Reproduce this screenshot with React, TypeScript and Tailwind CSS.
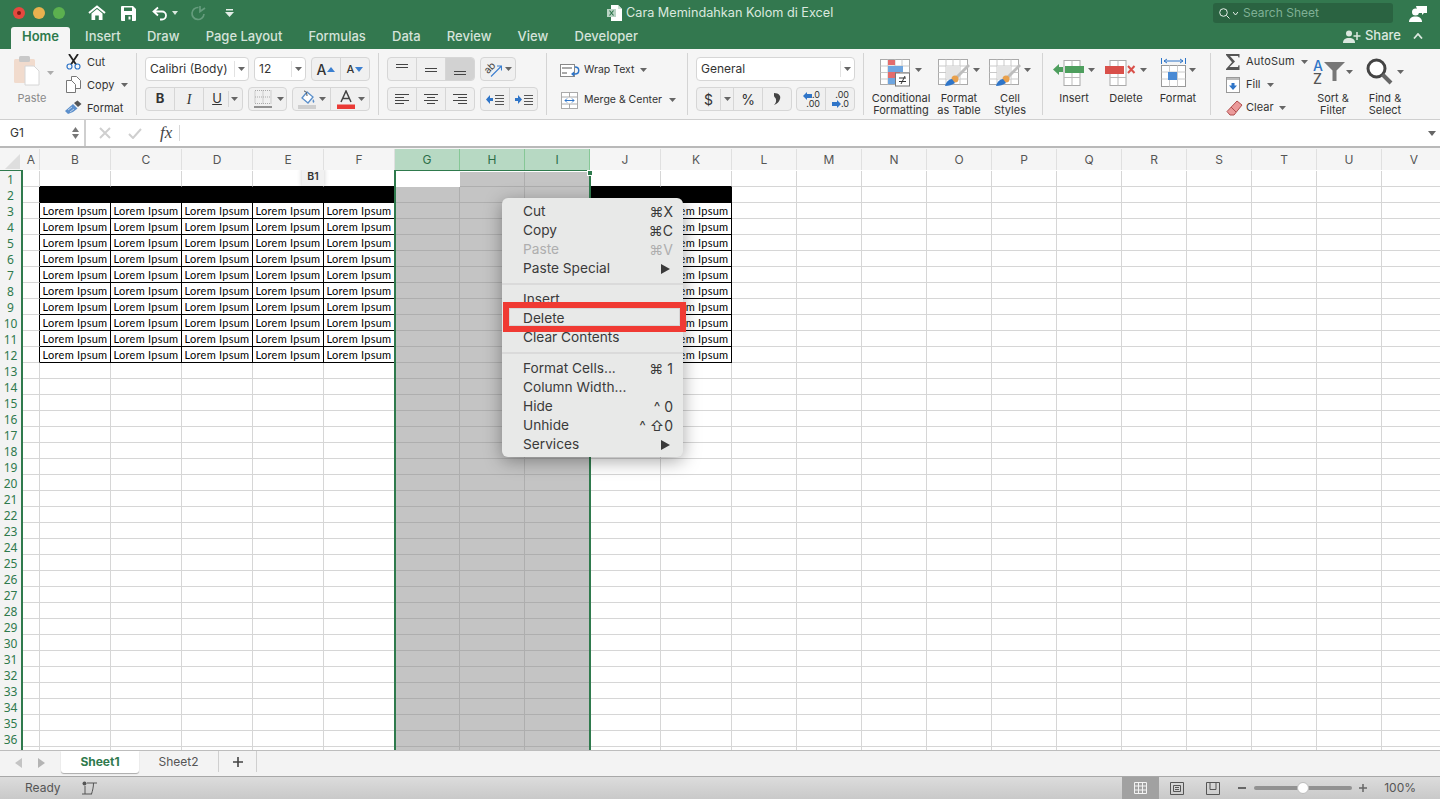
import React from "react";

const FONT = "font-['Inter','Noto_Sans',sans-serif]";

const TABS = ["Insert", "Draw", "Page Layout", "Formulas", "Data", "Review", "View", "Developer"];

const COLUMNS = [
  { label: "A", width: "w-[17px]" },
  { label: "B", width: "w-[71px]" },
  { label: "C", width: "w-[71px]" },
  { label: "D", width: "w-[71px]" },
  { label: "E", width: "w-[71px]" },
  { label: "F", width: "w-[71px]" },
  { label: "G", width: "w-[65px]" },
  { label: "H", width: "w-[65px]" },
  { label: "I", width: "w-[65px]" },
  { label: "J", width: "w-[71px]" },
  { label: "K", width: "w-[71px]" },
  { label: "L", width: "w-[65px]" },
  { label: "M", width: "w-[65px]" },
  { label: "N", width: "w-[65px]" },
  { label: "O", width: "w-[65px]" },
  { label: "P", width: "w-[65px]" },
  { label: "Q", width: "w-[65px]" },
  { label: "R", width: "w-[65px]" },
  { label: "S", width: "w-[65px]" },
  { label: "T", width: "w-[65px]" },
  { label: "U", width: "w-[65px]" },
  { label: "V", width: "w-[65px]" },
];

const ROWS = Array.from({ length: 37 }, (_, i) => i + 1);
const SELECTED = ["G", "H", "I"];
const TABLE = ["B", "C", "D", "E", "F", "J", "K"];

const MENU_TOP = [
  { label: "Cut", key: "⌘X" },
  { label: "Copy", key: "⌘C" },
  { label: "Paste", key: "⌘V", disabled: true },
  { label: "Paste Special", arrow: true },
];
const MENU_MID = [{ label: "Insert" }, { label: "Delete" }, { label: "Clear Contents" }];
const MENU_BOTTOM = [
  { label: "Format Cells...", key: "⌘ 1" },
  { label: "Column Width..." },
  { label: "Hide", key: "^ 0" },
  { label: "Unhide", key: "^ ⇧0" },
  { label: "Services", arrow: true },
];

// Small down-pointing caret used all over the ribbon
function Caret({ className = "" }: { className?: string }) {
  return (
    <svg width="7" height="4" viewBox="0 0 7 4" className={className}>
      <path d="M0 0h7L3.5 4z" fill="#666" />
    </svg>
  );
}

function Divider() {
  return <div className="h-[62px] w-px shrink-0 self-center bg-[#d4d4d4]" />;
}

// Horizontal text-lines icon for the alignment buttons
function Lines({ rows }: { rows: [number, number, number][] }) {
  return (
    <svg width="16" height="14" viewBox="0 0 16 14">
      {rows.map(([a, b, y], i) => (
        <line key={i} x1={a} x2={b} y1={y + 0.5} y2={y + 0.5} stroke="#444" strokeWidth="1" />
      ))}
    </svg>
  );
}

function HomeIcon() {
  return (
    <svg width="18" height="16" viewBox="0 0 18 16">
      <path d="M1 8 9 1.5 17 8" fill="none" stroke="#fff" strokeWidth="2" />
      <path d="M3.5 8.5 9 4l5.5 4.5V15h-3.7v-4.500H7.200V15H3.500z" fill="#fff" />
    </svg>
  );
}

function SaveIcon() {
  return (
    <svg width="15" height="15" viewBox="0 0 15 15">
      <path d="M1 0h11l3 3v11a1 1 0 0 1-1 1H1a1 1 0 0 1-1-1V1a1 1 0 0 1 1-1z" fill="#fff" />
      <rect x="3" y="1.500" width="8" height="3.500" fill="#33784f" />
      <rect x="4" y="9" width="7" height="6" fill="#33784f" />
      <rect x="7.500" y="10.500" width="2" height="3" fill="#fff" />
    </svg>
  );
}

function UndoIcon() {
  return (
    <svg width="16" height="15" viewBox="0 0 16 15">
      <path d="M6 1.500 1.500 5.500 6 9.500M2 5.500h8a4 4 0 0 1 4 4 4 4 0 0 1-4 4H8" fill="none" stroke="#fff" strokeWidth="1.800" />
    </svg>
  );
}

function RedoIcon() {
  return (
    <svg width="16" height="16" viewBox="0 0 16 16">
      <path d="M10 1v5.500L15 3M8.500 2.500A6 6 0 1 0 14 9" fill="none" stroke="#659c7d" strokeWidth="1.700" />
    </svg>
  );
}

function CustomizeIcon() {
  return (
    <svg width="9" height="8" viewBox="0 0 9 8">
      <rect x="1" y="0" width="7" height="1.500" fill="#e4eee8" />
      <path d="M0 3h9L4.500 8z" fill="#e4eee8" />
    </svg>
  );
}

function WorkbookIcon() {
  return (
    <svg width="15" height="16" viewBox="0 0 15 16">
      <path d="M4 0h7l4 4v12H4z" fill="#fff" />
      <path d="M11 0v4h4z" fill="#cfe0d6" />
      <rect x="0" y="4" width="9" height="8" fill="#b9d3c4" />
      <path d="M2.500 5.500 6.500 10.500M6.500 5.500 2.500 10.500" stroke="#33784f" strokeWidth="1.200" />
    </svg>
  );
}

function PasteIcon() {
  return (
    <svg width="26" height="31" viewBox="0 0 26 31">
      <rect x="0" y="4" width="21" height="24" rx="1.500" fill="#f1dbcd" />
      <rect x="5" y="1" width="11" height="6" rx="1.500" fill="#c9c9c9" />
      <path d="M11 11h9l5 5v14H11z" fill="#fff" stroke="#d6d6d6" />
    </svg>
  );
}

function ScissorsIcon() {
  return (
    <svg width="15" height="16" viewBox="0 0 15 16">
      <path d="M3 0 10 10.500M12 0 5 10.500" stroke="#222" strokeWidth="1.800" />
      <circle cx="3.500" cy="12.500" r="2.500" fill="none" stroke="#2f75c8" strokeWidth="1.200" />
      <circle cx="11.500" cy="12.500" r="2.500" fill="none" stroke="#2f75c8" strokeWidth="1.200" />
    </svg>
  );
}

function CopyIcon() {
  return (
    <svg width="15" height="17" viewBox="0 0 15 17">
      <path d="M5.500.500h5l4 4v8h-9z" fill="#fff" stroke="#777" />
      <path d="M.500 4.500h5l4 4v8h-9z" fill="#fff" stroke="#777" />
    </svg>
  );
}

function BrushIcon() {
  return (
    <svg width="17" height="15" viewBox="0 0 17 15">
      <path d="M9 3 12.500 0.500 16.500 4 13 7z" fill="#555" />
      <path d="M8 4 12.500 8.500 8 12 3 14 0 11z" fill="#5c8fcb" />
      <path d="M3 10 7 7M5 12 9 9" stroke="#d7e4f3" strokeWidth="0.800" />
    </svg>
  );
}

function GrowFontIcon({ up }: { up: boolean }) {
  return (
    <svg width="8" height="5" viewBox="0 0 8 5">
      <path d={up ? "M4 0 8 5H0z" : "M0 0h8L4 5z"} fill="#3b7fd0" />
    </svg>
  );
}

function BordersIcon() {
  return (
    <svg width="18" height="18" viewBox="0 0 18 18">
      <path d="M1 .500h16v13H1zM1 7h16M9 .500v13" fill="none" stroke="#aaa" strokeDasharray="1 1" />
      <line x1="0" x2="18" y1="17" y2="17" stroke="#333" />
    </svg>
  );
}

function FillIcon() {
  return (
    <svg width="18" height="19" viewBox="0 0 18 19">
      <path d="M4 8 9 2l6 5-5 6z" fill="#fff" stroke="#5b8fca" strokeWidth="1.300" />
      <path d="M6 1c2 0 3 2 3 5" fill="none" stroke="#555" />
      <path d="M15 9c1 1.500 2 2.500 1 3.500s-2-1-1-3.500z" fill="#5b8fca" />
      <rect x="0" y="15" width="18" height="4" fill="#cfcfcf" />
    </svg>
  );
}

function FontColorIcon() {
  return (
    <svg width="18" height="19" viewBox="0 0 18 19">
      <path d="M4 12 9 1l5 11M6 8.500h6" fill="none" stroke="#444" strokeWidth="1.500" />
      <rect x="0" y="14.500" width="18" height="4.500" fill="#ea3a35" />
    </svg>
  );
}

function OrientationIcon() {
  return (
    <svg width="18" height="16" viewBox="0 0 18 16">
      <text x="0" y="10" fontSize="10" fill="#444" transform="rotate(-45 6 7)" fontFamily="Inter">ab</text>
      <path d="M7 15.500 17 5.500M13 5h4.500v4.500" fill="none" stroke="#3b7fd0" strokeWidth="1.100" />
    </svg>
  );
}

function IndentIcon({ flip }: { flip?: boolean }) {
  return (
    <svg width="18" height="11" viewBox="0 0 18 11">
      <path d={flip ? "M7 5.500 3 1v3H0v3h3v3z" : "M0 5.500 4 1v3h3v3H4v3z"} fill="#2f75c8" />
      <path d="M9 1.500h9M9 4.500h9M9 7.500h9M9 10.500h9" stroke="#555" />
    </svg>
  );
}

function WrapIcon() {
  return (
    <svg width="20" height="13" viewBox="0 0 20 13">
      <rect x=".5" y=".5" width="14" height="12" fill="#fff" stroke="#888" />
      <path d="M2 4h10M2 9h5" stroke="#555" />
      <path d="M15 3c5 0 5 7 0 7h-2" fill="none" stroke="#2f75c8" strokeWidth="1.500" />
      <path d="M11 10l3-2.500v5z" fill="#2f75c8" />
    </svg>
  );
}

function MergeIcon() {
  return (
    <svg width="17" height="17" viewBox="0 0 17 17">
      <rect x=".5" y=".5" width="16" height="16" fill="#fff" stroke="#aaa" />
      <path d="M.5 5h16M.5 12h16M8.500 .5V5M8.500 12v4.500" stroke="#aaa" />
      <path d="M4 8.500h9M6 6.500l-2 2 2 2M11 6.500l2 2-2 2" fill="none" stroke="#2f75c8" />
    </svg>
  );
}

function CommaIcon() {
  return (
    <svg width="8" height="12" viewBox="0 0 8 12">
      <path d="M1 0c5 0 7 3 6 6-.8 3-3 5-6 6 1.500-1.500 2.500-3.500 2-5.500C2.800 4.500 1 4.500 1 2.500z" fill="#444" />
    </svg>
  );
}

function DecimalIcon({ increase }: { increase: boolean }) {
  return (
    <div className="relative flex h-full w-full flex-col items-end justify-center pr-[5px] text-[9px] leading-[9px] text-[#333]">
      {increase ? (
        <>
          <span>.0</span>
          <span>.00</span>
        </>
      ) : (
        <>
          <span>.00</span>
          <span>.0</span>
        </>
      )}
      <svg
        width="9"
        height="8"
        viewBox="0 0 9 8"
        className={increase ? "absolute left-[6px] top-[4px]" : "absolute left-[6px] top-[12px]"}
      >
        <path d={increase ? "M0 4 4 0v2h5v4H4v2z" : "M9 4 5 0v2H0v4h5v2z"} fill="#2f75c8" />
      </svg>
    </div>
  );
}

function SheetGrid({ children }: { children?: React.ReactNode }) {
  return (
    <svg width="32" height="28" viewBox="0 0 32 28">
      <rect x=".5" y=".5" width="29" height="25" fill="#fff" stroke="#aaa" />
      <path d="M.5 7h29M.5 13.500h29M.5 20h29M8 .5v25M15 .5v25M22 .5v25" stroke="#c9c9c9" />
      {children}
    </svg>
  );
}

function ConditionalIcon() {
  return (
    <SheetGrid>
      <rect x="8" y="1" width="7" height="5" fill="#e46c6c" />
      <rect x="8" y="7" width="15" height="6" fill="#6fa6e0" />
      <rect x="8" y="13" width="12" height="6" fill="#e46c6c" />
      <rect x="8" y="19" width="7" height="6" fill="#6fa6e0" />
      <rect x="15.500" y="14" width="14" height="13" fill="#fff" stroke="#777" />
      <path d="M19 19h7M19 22.500h7M25 17l-4 8" stroke="#333" />
    </SheetGrid>
  );
}

function TableBrushIcon() {
  return (
    <SheetGrid>
      <rect x="8" y="7" width="14" height="13" fill="#e4e4e4" />
      <path d="M31 6 19 18" stroke="#bdbdbd" strokeWidth="3" />
      <circle cx="17" cy="20" r="3.500" fill="#e8a04c" />
      <path d="M7 27c1-4 4-7 7-7l3 4c-3 2-6 3-10 3z" fill="#2f75c8" />
    </SheetGrid>
  );
}

function InsertIcon() {
  return (
    <svg width="32" height="26" viewBox="0 0 32 26">
      <rect x="11" y=".5" width="16" height="25" fill="#fff" stroke="#aaa" />
      <path d="M11 17.500h16M19 .5v25" stroke="#bbb" />
      <rect x="12" y="6" width="19" height="7" fill="#4e9f5e" />
      <path d="M0 9.500 6 4v3h4v5H6v3z" fill="#4e9f5e" />
    </svg>
  );
}

function DeleteIcon() {
  return (
    <svg width="32" height="26" viewBox="0 0 32 26">
      <rect x="5" y=".5" width="16" height="25" fill="#fff" stroke="#aaa" />
      <path d="M5 17.500h16M13 .5v25" stroke="#bbb" />
      <rect x="0" y="6" width="19" height="8" fill="#d9504a" />
      <path d="M23 6l6.500 7M29.500 6 23 13" stroke="#d9504a" strokeWidth="2" />
    </svg>
  );
}

function FormatIcon() {
  return (
    <svg width="25" height="29" viewBox="0 0 25 29">
      <path d="M.5 0v6M24.500 0v6M3 3h19M6 1 3 3l3 2M19 1l3 2-3 2" fill="none" stroke="#2f75c8" />
      <rect x=".5" y="7.500" width="24" height="21" fill="#fff" stroke="#999" />
      <path d="M.5 14h24M.5 21h24M8.500 7.500v21M16.500 7.500v21" stroke="#ccc" />
      <rect x="7" y="14" width="9" height="8" fill="#4a8ad4" />
    </svg>
  );
}

function SumIcon() {
  return (
    <svg width="14" height="16" viewBox="0 0 14 16">
      <path d="M0 0h13.500v3.500H12.500L12 2H4l5 5.500L3.500 13H12l.5-1.800h1V16H0v-1l6-6.800L0 1z" fill="#555" />
    </svg>
  );
}

function FillDownIcon() {
  return (
    <svg width="14" height="16" viewBox="0 0 14 16">
      <rect x=".5" y=".5" width="13" height="15" fill="#fff" stroke="#999" />
      <rect x="1" y="1" width="12" height="2" fill="#bbb" />
      <path d="M7 13 3 8.500h2.500V6h3v2.500H11z" fill="#2f75c8" />
    </svg>
  );
}

function EraserIcon() {
  return (
    <svg width="17" height="16" viewBox="0 0 17 16">
      <path d="M11 1 16 5 8 15H4L1 11.500z" fill="#eb9a9a" stroke="#b04f4f" />
      <path d="M5 7l5 5" stroke="#b04f4f" />
    </svg>
  );
}

function FunnelIcon() {
  return (
    <svg width="21" height="19" viewBox="0 0 21 19">
      <path d="M0 0h21L12.500 8.500V19h-4V8.500z" fill="#777" />
    </svg>
  );
}

function MagnifierIcon() {
  return (
    <svg width="27" height="27" viewBox="0 0 27 27">
      <circle cx="10.500" cy="10.500" r="8.500" fill="#fff" stroke="#444" strokeWidth="3" />
      <path d="M16.500 16.500 25 25" stroke="#666" strokeWidth="4" />
    </svg>
  );
}

function SearchIcon() {
  return (
    <svg width="11" height="11" viewBox="0 0 11 11">
      <circle cx="4.500" cy="4.500" r="3.800" fill="none" stroke="#e6efe9" />
      <path d="M7.500 7.500 10.500 10.500" stroke="#e6efe9" />
    </svg>
  );
}

function PersonBubbleIcon() {
  return (
    <svg width="18" height="18" viewBox="0 0 18 18">
      <path d="M7 2h11v7h-3l-2 2V9H9z" fill="#fff" />
      <circle cx="6.500" cy="8" r="3.500" fill="#fff" />
      <path d="M0 18c0-3.500 2.500-5.500 6.500-5.500S13 14.500 13 18z" fill="#fff" />
    </svg>
  );
}

function ShareIcon() {
  return (
    <svg width="18" height="13" viewBox="0 0 18 13">
      <circle cx="6" cy="3.500" r="3" fill="#dbe8df" />
      <path d="M0 13c0-3.500 2-5 6-5s6 1.500 6 5z" fill="#dbe8df" />
      <path d="M14 2v8M10.500 6h7" stroke="#dbe8df" strokeWidth="1.500" />
    </svg>
  );
}

function RibbonButton({ children, className = "" }: { children: React.ReactNode; className?: string }) {
  return <div className={`flex h-full items-center justify-center border-r border-[#d6d6d6] last:border-r-0 ${className}`}>{children}</div>;
}

function ButtonGroup({ children, className = "" }: { children: React.ReactNode; className?: string }) {
  return <div className={`flex h-[24px] overflow-hidden rounded-[4px] border border-[#d6d6d6] bg-[#f0f0f0] ${className}`}>{children}</div>;
}

function BigButton({
  icon,
  label,
  width,
  caret = true,
}: {
  icon: React.ReactNode;
  label: React.ReactNode;
  width: string;
  caret?: boolean;
}) {
  return (
    <div className={`flex shrink-0 flex-col items-center ${width}`}>
      <div className="flex h-[34px] shrink-0 items-center gap-[3px] pt-px">
        {icon}
        {caret && <Caret className="mb-[6px]" />}
      </div>
      <div className="whitespace-nowrap pt-[3px] text-center text-[11px] leading-[12px] text-[#333]">{label}</div>
    </div>
  );
}

function TitleBar() {
  return (
    <div className="h-[49px] shrink-0 bg-[#33784f] text-white">
      <div className="flex h-[26px] items-center">
        <div className="ml-[13px] flex items-center gap-[8px]">
          <div className="flex h-[12px] w-[12px] items-center justify-center rounded-full bg-[#e5483f]">
            <div className="h-[4px] w-[4px] rounded-full bg-[#7d1a14]" />
          </div>
          <div className="h-[12px] w-[12px] rounded-full bg-[#e9b14f]" />
          <div className="h-[12px] w-[12px] rounded-full bg-[#5cb04f]" />
        </div>
        <div className="ml-[23px] flex items-center">
          <HomeIcon />
          <div className="ml-[15px]">
            <SaveIcon />
          </div>
          <div className="ml-[16px]">
            <UndoIcon />
          </div>
          <svg width="6" height="4" viewBox="0 0 6 4" className="ml-[4px]">
            <path d="M0 0h6L3 4z" fill="#dbe8df" />
          </svg>
          <div className="ml-[12px]">
            <RedoIcon />
          </div>
          <div className="ml-[19px]">
            <CustomizeIcon />
          </div>
        </div>
        <div className="ml-[373px] flex items-center gap-[4px] text-[12.7px] text-[#dbe8df]">
          <WorkbookIcon />
          <span>Cara Memindahkan Kolom di Excel</span>
        </div>
        <div className="ml-auto flex items-center">
          <div className="flex h-[20px] w-[180px] items-center gap-[3px] rounded-[3px] bg-[#2a6341] pl-[6px] text-[12px] text-[#7fb095]">
            <SearchIcon />
            <svg width="5" height="3" viewBox="0 0 5 3" className="mr-[2px]">
              <path d="M0 0l2.500 3L5 0" fill="none" stroke="#e6efe9" />
            </svg>
            <span>Search Sheet</span>
          </div>
          <div className="ml-[16px] mr-[13px]">
            <PersonBubbleIcon />
          </div>
        </div>
      </div>
      <div className="flex h-[23px] items-end">
        <div className="ml-[11px] flex h-[22px] w-[59px] items-center justify-center rounded-t-[3px] bg-[#f5f5f5] pb-[2px] text-[13px] font-semibold text-[#2d7a4c]">
          Home
        </div>
        <div className="ml-[2px] flex h-[22px] items-center pb-[2px]">
          {TABS.map((t) => (
            <span key={t} className="px-[13.1px] text-[13px] font-medium text-[#d5e3da]">
              {t}
            </span>
          ))}
        </div>
        <div className="ml-auto mr-[17px] flex h-[22px] items-center pb-[4px]">
          <ShareIcon />
          <span className="ml-[4px] text-[13px] font-medium text-[#dbe8df]">Share</span>
          <svg width="10" height="6" viewBox="0 0 10 6" className="ml-[12px]">
            <path d="M1 5.500 5 1l4 4.500" fill="none" stroke="#dbe8df" strokeWidth="1.800" />
          </svg>
        </div>
      </div>
    </div>
  );
}

function Ribbon() {
  return (
    <div className="flex h-[71px] shrink-0 border-b border-[#cfcfcf] bg-[#f5f5f5] text-[#333]">
      {/* Clipboard */}
      <div className="flex w-[136px] shrink-0">
        <div className="ml-[14px] flex w-[40px] flex-col">
          <div className="flex items-center pt-[6px]">
            <PasteIcon />
            <Caret className="ml-[7px] mt-[4px] opacity-50" />
          </div>
          <span className="-ml-[4px] pt-[4px] text-center text-[11px] text-[#8a8a8a]">Paste</span>
        </div>
        <div className="ml-[12px] flex flex-col pt-[1px] text-[11px] leading-[16px]">
          <div className="flex h-[23px] items-center gap-[6px]">
            <ScissorsIcon />
            <span>Cut</span>
          </div>
          <div className="flex h-[23px] items-center gap-[6px]">
            <CopyIcon />
            <span>Copy</span>
            <Caret className="ml-[1px]" />
          </div>
          <div className="-ml-[1px] flex h-[23px] items-center gap-[5px]">
            <BrushIcon />
            <span>Format</span>
          </div>
        </div>
      </div>
      <Divider />

      {/* Font */}
      <div className="flex w-[241px] shrink-0 flex-col gap-[6px] pl-[8px] pt-[8px]">
        <div className="flex gap-[5px]">
          <div className="flex h-[24px] w-[104px] items-center rounded-[4px] border border-[#d6d6d6] bg-white pb-px pl-[4px] text-[12px]">
            <span className="flex-1">Calibri (Body)</span>
            <span className="flex h-[16px] w-[14px] items-center justify-center border-l border-[#e2e2e2]">
              <Caret />
            </span>
          </div>
          <div className="flex h-[24px] w-[52px] items-center rounded-[4px] border border-[#d6d6d6] bg-white pb-px pl-[4px] text-[12px]">
            <span className="flex-1">12</span>
            <span className="flex h-[16px] w-[14px] items-center justify-center border-l border-[#e2e2e2]">
              <Caret />
            </span>
          </div>
          <ButtonGroup className="w-[59px]">
            <RibbonButton className="w-[29px] gap-[1px] text-[14px] font-medium">
              A<GrowFontIcon up />
            </RibbonButton>
            <RibbonButton className="flex-1 gap-[1px] text-[11px] font-medium">
              A<GrowFontIcon up={false} />
            </RibbonButton>
          </ButtonGroup>
        </div>
        <div className="flex gap-[5px]">
          <ButtonGroup className="w-[98px]">
            <RibbonButton className="w-[29px] text-[13px] font-bold">B</RibbonButton>
            <RibbonButton className="w-[29px] font-['Liberation_Serif',serif] text-[14px] italic">I</RibbonButton>
            <div className="flex flex-1 items-center justify-center gap-[6px] pl-[6px]">
              <span className="text-[13px] underline">U</span>
              <span className="flex h-[16px] w-[12px] items-center justify-center border-l border-[#d6d6d6]">
                <Caret />
              </span>
            </div>
          </ButtonGroup>
          <ButtonGroup className="w-[39px]">
            <div className="flex flex-1 items-center justify-center gap-[2px] pl-[2px]">
              <BordersIcon />
              <Caret className="ml-[3px]" />
            </div>
          </ButtonGroup>
          <ButtonGroup className="w-[78px]">
            <RibbonButton className="w-[38px] gap-[3px] pl-[1px]">
              <FillIcon />
              <Caret />
            </RibbonButton>
            <RibbonButton className="flex-1 gap-[3px] pl-[2px]">
              <FontColorIcon />
              <Caret />
            </RibbonButton>
          </ButtonGroup>
        </div>
      </div>
      <Divider />

      {/* Alignment */}
      <div className="flex w-[167px] shrink-0 flex-col gap-[6px] pl-[8px] pt-[8px]">
        <div className="flex gap-[5px]">
          <ButtonGroup className="w-[88px]">
            <RibbonButton className="w-[29px]">
              <Lines rows={[[2, 14, 2], [2, 14, 5]]} />
            </RibbonButton>
            <RibbonButton className="w-[29px]">
              <Lines rows={[[2, 14, 6], [2, 14, 9]]} />
            </RibbonButton>
            <RibbonButton className="flex-1 bg-[#d2d2d2]">
              <Lines rows={[[2, 14, 9], [2, 14, 12]]} />
            </RibbonButton>
          </ButtonGroup>
          <ButtonGroup className="w-[36px]">
            <div className="flex flex-1 items-center justify-center gap-[3px]">
              <OrientationIcon />
              <Caret />
            </div>
          </ButtonGroup>
        </div>
        <div className="flex gap-[5px]">
          <ButtonGroup className="w-[88px]">
            <RibbonButton className="w-[29px]">
              <Lines rows={[[1, 15, 2], [1, 10, 5], [1, 15, 8], [1, 10, 11]]} />
            </RibbonButton>
            <RibbonButton className="w-[29px]">
              <Lines rows={[[1, 15, 2], [4, 12, 5], [1, 15, 8], [4, 12, 11]]} />
            </RibbonButton>
            <RibbonButton className="flex-1">
              <Lines rows={[[1, 15, 2], [6, 15, 5], [1, 15, 8], [6, 15, 11]]} />
            </RibbonButton>
          </ButtonGroup>
          <ButtonGroup className="w-[58px]">
            <RibbonButton className="w-[29px]">
              <IndentIcon />
            </RibbonButton>
            <RibbonButton className="flex-1">
              <IndentIcon flip />
            </RibbonButton>
          </ButtonGroup>
        </div>
      </div>
      <Divider />

      {/* Wrap and merge */}
      <div className="flex w-[140px] shrink-0 flex-col pl-[13px] pt-[12px] text-[10.5px]">
        <div className="flex h-[18px] items-center">
          <WrapIcon />
          <span className="ml-[4px]">Wrap Text</span>
          <Caret className="ml-[6px]" />
        </div>
        <div className="mt-[12px] flex h-[18px] items-center">
          <div className="ml-[1px]">
            <MergeIcon />
          </div>
          <span className="ml-[6px]">Merge &amp; Center</span>
          <Caret className="ml-[7px]" />
        </div>
      </div>
      <Divider />

      {/* Number */}
      <div className="flex w-[175px] shrink-0 flex-col gap-[6px] pl-[8px] pt-[8px]">
        <div className="flex h-[24px] w-[159px] items-center rounded-[4px] border border-[#d6d6d6] bg-white pb-px pl-[4px] text-[12px]">
          <span className="flex-1">General</span>
          <span className="flex h-[16px] w-[14px] items-center justify-center border-l border-[#e2e2e2]">
            <Caret />
          </span>
        </div>
        <div className="flex gap-[4px]">
          <ButtonGroup className="w-[96px]">
            <RibbonButton className="w-[37px] text-[14px]">
              <span className="flex-1 border-r border-[#d6d6d6] text-center">$</span>
              <span className="flex w-[12px] justify-center">
                <Caret />
              </span>
            </RibbonButton>
            <RibbonButton className="w-[29px] text-[14px]">%</RibbonButton>
            <RibbonButton className="flex-1">
              <CommaIcon />
            </RibbonButton>
          </ButtonGroup>
          <ButtonGroup className="w-[59px]">
            <RibbonButton className="w-[29px]">
              <DecimalIcon increase />
            </RibbonButton>
            <RibbonButton className="flex-1">
              <DecimalIcon increase={false} />
            </RibbonButton>
          </ButtonGroup>
        </div>
      </div>
      <Divider />

      {/* Styles */}
      <div className="flex w-[178px] shrink-0 pt-[6px]">
        <BigButton icon={<ConditionalIcon />} label={<>Conditional<br />Formatting</>} width="w-[74px]" />
        <BigButton icon={<TableBrushIcon />} label={<>Format<br />as Table</>} width="w-[42px]" />
        <BigButton icon={<TableBrushIcon />} label={<>Cell<br />Styles</>} width="w-[60px]" />
      </div>
      <Divider />

      {/* Cells */}
      <div className="flex w-[167px] shrink-0 pl-[5px] pt-[6px]">
        <BigButton icon={<InsertIcon />} label="Insert" width="w-[52px]" />
        <BigButton icon={<DeleteIcon />} label="Delete" width="w-[52px]" />
        <BigButton icon={<FormatIcon />} label="Format" width="w-[52px]" />
      </div>
      <Divider />

      {/* Editing */}
      <div className="flex flex-1 pt-[1px]">
        <div className="ml-[15px] flex w-[96px] shrink-0 flex-col text-[11px]">
          <div className="flex h-[23px] items-center">
            <span className="flex w-[20px]">
              <SumIcon />
            </span>
            <span className="tracking-[0.2px]">AutoSum</span>
            <Caret className="ml-[6px]" />
          </div>
          <div className="flex h-[23px] items-center">
            <span className="flex w-[20px]">
              <FillDownIcon />
            </span>
            <span>Fill</span>
            <Caret className="ml-[6px]" />
          </div>
          <div className="flex h-[23px] items-center">
            <span className="flex w-[20px]">
              <EraserIcon />
            </span>
            <span>Clear</span>
            <Caret className="ml-[5px]" />
          </div>
        </div>
        <div className="-ml-[15px] flex w-[52px] shrink-0 flex-col items-center pt-[4px]">
          <div className="flex h-[35px] items-center gap-[1px]">
            <div className="flex flex-col text-[14px] font-medium leading-[13px]">
              <span className="text-[#2f75c8]">A</span>
              <span className="text-[#555]">Z</span>
            </div>
            <FunnelIcon />
            <Caret />
          </div>
          <div className="pt-[3px] text-center text-[11px] leading-[12px]">
            Sort &amp;
            <br />
            Filter
          </div>
        </div>
        <div className="flex w-[52px] shrink-0 flex-col items-center pt-[4px]">
          <div className="flex h-[35px] items-center gap-[4px]">
            <MagnifierIcon />
            <Caret />
          </div>
          <div className="pt-[3px] text-center text-[11px] leading-[12px]">
            Find &amp;
            <br />
            Select
          </div>
        </div>
      </div>
    </div>
  );
}

function FormulaBar() {
  return (
    <div className="flex h-[26px] shrink-0 items-center bg-white">
      <div className="flex h-full w-[86px] items-center border-r-2 border-[#cfcfcf] pl-[10px] text-[12px] text-[#333]">
        <span className="flex-1">G1</span>
        <div className="mr-[5px] flex flex-col gap-[2px]">
          <svg width="7" height="5" viewBox="0 0 7 5">
            <path d="M3.500 0 7 5H0z" fill="#777" />
          </svg>
          <svg width="7" height="5" viewBox="0 0 7 5">
            <path d="M0 0h7L3.500 5z" fill="#777" />
          </svg>
        </div>
      </div>
      <svg width="12" height="12" viewBox="0 0 12 12" className="ml-[13px]">
        <path d="M1 1l10 10M11 1 1 11" stroke="#cfcfcf" strokeWidth="2" />
      </svg>
      <svg width="14" height="11" viewBox="0 0 14 11" className="ml-[17px]">
        <path d="M1 6l4 4 8-9" fill="none" stroke="#cfcfcf" strokeWidth="2" />
      </svg>
      <span className="ml-[18px] font-['Liberation_Serif',serif] text-[17px] italic text-[#444]">fx</span>
      <div className="ml-[7px] h-[16px] w-px bg-[#d8d8d8]" />
      <svg width="8" height="5" viewBox="0 0 8 5" className="ml-auto mr-[4px]">
        <path d="M0 0h8L4 5z" fill="#666" />
      </svg>
    </div>
  );
}

function ColumnHeaders() {
  return (
    <div className="flex h-[24px] shrink-0 border-t-2 border-[#b9b9b9] bg-[#f5f5f5] pt-px">
      <div className="relative w-[23px] shrink-0">
        <svg width="22" height="21" viewBox="0 0 22 21" className="absolute bottom-0 left-0">
          <path d="M5 20 20 5v15z" fill="#dedede" />
        </svg>
      </div>
      {COLUMNS.map((c) => {
        const selected = SELECTED.includes(c.label);
        return (
          <div
            key={c.label}
            className={
              selected
                ? `flex shrink-0 items-center justify-center border-r border-[#86c796] bg-[#b7d9c3] text-[12px] text-[#2c6e47] ${c.width}`
                : `flex shrink-0 items-center justify-center border-r border-[#e0e0e0] text-[12px] text-[#555] ${c.width}`
            }
          >
            {c.label}
          </div>
        );
      })}
    </div>
  );
}

function Cell({ col, row, width }: { col: string; row: number; width: string }) {
  const inTable = row >= 3 && row <= 12 && TABLE.includes(col);
  if (SELECTED.includes(col)) {
    if (col === "G" && row === 1) return <div className={`shrink-0 bg-white ${width}`} />;
    return <div className={`shrink-0 border-b border-r border-[#aeaeae] bg-[#c4c4c4] ${width}`} />;
  }
  if (row === 2 && TABLE.includes(col)) return <div className={`shrink-0 bg-black ${width}`} />;
  if (inTable) {
    return (
      <div className={`flex shrink-0 items-center justify-center border-b border-r border-black font-['Lato',sans-serif] text-[11px] leading-none tracking-[0.25px] text-black ${width}`}>
        Lorem Ipsum
      </div>
    );
  }
  // column A and the row-1 cells touching the table take its black edge
  const blackRight = col === "A" && row >= 2 && row <= 12;
  const blackBottom = row === 1 && TABLE.includes(col);
  return (
    <div
      className={`shrink-0 border-b border-r ${blackRight ? "border-r-black" : "border-r-[#d6d6d6]"} ${
        blackBottom ? "border-b-black" : "border-b-[#d6d6d6]"
      } ${width}`}
    />
  );
}

function MenuItem({ label, shortcut, disabled, arrow }: { label: string; shortcut?: string; disabled?: boolean; arrow?: boolean }) {
  return (
    <div className={`flex h-[19px] items-center pl-[21px] pr-[10px] text-[13.7px] ${disabled ? "text-[#aeaeae]" : "text-[#3a3a3a]"}`}>
      <span className="flex-1">{label}</span>
      {shortcut && <span className="text-[14px]">{shortcut}</span>}
      {arrow && (
        <svg width="9" height="10" viewBox="0 0 9 10" className="mr-[3px]">
          <path d="M0 0l9 5-9 5z" fill="#3a3a3a" />
        </svg>
      )}
    </div>
  );
}

function ContextMenu() {
  return (
    <div className="absolute left-[502px] top-[28px] w-[181px] rounded-[6px] bg-[#e8e9e8] pb-[3px] pt-[4px] shadow-[0_4px_18px_rgba(0,0,0,0.35)]">
      {MENU_TOP.map((m) => (
        <MenuItem key={m.label} label={m.label} shortcut={m.key} disabled={m.disabled} arrow={m.arrow} />
      ))}
      <div className="my-[5px] h-[2px] bg-[#dadada]" />
      {MENU_MID.map((m) => (
        <MenuItem key={m.label} label={m.label} />
      ))}
      <div className="my-[5px] h-[2px] bg-[#dadada]" />
      {MENU_BOTTOM.map((m) => (
        <MenuItem key={m.label} label={m.label} shortcut={m.key} arrow={m.arrow} />
      ))}
      <div className="absolute left-px top-[104px] h-[30px] w-[183px] border-[6px] border-[#f03a33]">
        <div className="h-full w-full border border-[#d6d6d6]" />
      </div>
    </div>
  );
}

function Grid() {
  return (
    <div className="relative flex-1 overflow-hidden bg-white pt-px">
      {ROWS.map((row) => (
        <div key={row} className="flex h-[16px]">
          <div className="flex w-[23px] shrink-0 items-center justify-center border-r-2 border-[#2f7a4d] bg-[#f3f3f3] pt-[1px] font-['Noto_Sans',sans-serif] text-[12px] text-[#2f7a4d]">
            {row}
          </div>
          {COLUMNS.map((c) => (
            <Cell key={c.label} col={c.label} row={row} width={c.width} />
          ))}
        </div>
      ))}
      {/* row-1 edge of the row header */}
      <div className="absolute left-0 top-0 h-px w-[23px] bg-[#2f7a4d]" />
      {/* column selection outline */}
      <div className="absolute bottom-0 left-[394px] top-0 w-[197px] border-x-2 border-t border-[#2f7a4d]">
        <div className="ml-[63px] h-px bg-white" />
      </div>
      <div className="absolute left-[587px] top-0 h-[6px] w-[6px] border border-white bg-[#2f7a4d]" />
      {/* hover tooltip from the column drag */}
      <div className="absolute left-[302px] top-[-3px] flex h-[19px] w-[22px] items-center justify-center bg-[#f1f1f1] text-[10.5px] font-semibold text-[#333] shadow-[0_1px_5px_rgba(0,0,0,0.2)]">
        B1
      </div>
      <ContextMenu />
    </div>
  );
}

function SheetTabs() {
  return (
    <div className="flex h-[26px] shrink-0 border-t border-[#bdbdbd] bg-[#f3f3f3]">
      <div className="flex w-[61px] items-center gap-[16px] pb-[2px] pl-[15px]">
        <svg width="7" height="10" viewBox="0 0 7 10">
          <path d="M7 0v10L0 5z" fill="#c4c4c4" />
        </svg>
        <svg width="7" height="10" viewBox="0 0 7 10">
          <path d="M0 0v10l7-5z" fill="#b4b4b4" />
        </svg>
      </div>
      <div className="flex h-[22px] w-[78px] items-center justify-center rounded-b-[3px] bg-white text-[12px] font-bold text-[#2f7a4d] shadow-[0_1px_1px_rgba(0,0,0,0.3)]">
        Sheet1
      </div>
      <div className="flex h-[21px] w-[80px] items-center justify-center border-r border-[#cfcfcf] text-[12px] text-[#555]">Sheet2</div>
      <div className="flex h-[21px] w-[38px] items-center justify-center border-r border-[#cfcfcf]">
        <svg width="10" height="10" viewBox="0 0 10 10">
          <path d="M5 0v10M0 5h10" stroke="#444" strokeWidth="1.600" />
        </svg>
      </div>
    </div>
  );
}

function StatusBar() {
  return (
    <div className="flex h-[23px] shrink-0 items-center border-t border-[#a8a8a8] bg-gradient-to-b from-[#dcdcdc] to-[#c9c9c9] text-[#555]">
      <span className="ml-[25px] text-[12px]">Ready</span>
      <svg width="16" height="14" viewBox="0 0 16 14" className="ml-[21px]">
        <circle cx="2.500" cy="2.500" r="2" fill="#555" />
        <path d="M5 2h10M11.500 2c0 4-1 8-2 11M0 13h10M3 5v8" fill="none" stroke="#555" />
      </svg>
      <div className="ml-auto flex h-full items-center">
        <div className="flex h-full w-[37px] items-center justify-center bg-[#a1a1a1]">
          <svg width="13" height="12" viewBox="0 0 13 12">
            <path d="M.5.500h12v11H.5zM.5 4h12M.5 8h12M4.500.500v11M8.500.500v11" fill="none" stroke="#f3f3f3" />
          </svg>
        </div>
        <div className="flex w-[36px] justify-center">
          <svg width="14" height="13" viewBox="0 0 14 13">
            <path d="M.5.500h13v12H.5zM3.500 3.500h7v6h-7zM5 5.500h4M5 7.500h4" fill="none" stroke="#555" />
          </svg>
        </div>
        <div className="flex w-[36px] justify-center">
          <svg width="14" height="13" viewBox="0 0 14 13">
            <path d="M.5.500h13v12H.5zM4 .5v7h6v-7" fill="none" stroke="#555" />
          </svg>
        </div>
        <svg width="8" height="2" viewBox="0 0 8 2" className="ml-[7px]">
          <rect width="8" height="2" fill="#666" />
        </svg>
        <div className="relative ml-[8px] h-[4px] w-[98px] rounded-full bg-[#929292]">
          <div className="absolute left-[43px] top-[-4px] h-[12px] w-[12px] rounded-full border border-[#bdbdbd] bg-white" />
        </div>
        <svg width="8" height="8" viewBox="0 0 8 8" className="ml-[7px]">
          <path d="M4 0v8M0 4h8" stroke="#666" strokeWidth="1.500" />
        </svg>
        <span className="ml-[17px] mr-[24px] text-[12px]">100%</span>
      </div>
    </div>
  );
}

export default function App() {
  return (
    <div className={`relative flex h-[799px] w-[1440px] flex-col overflow-hidden bg-white ${FONT}`}>
      <TitleBar />
      <Ribbon />
      <FormulaBar />
      <ColumnHeaders />
      <Grid />
      <SheetTabs />
      <StatusBar />
    </div>
  );
}
